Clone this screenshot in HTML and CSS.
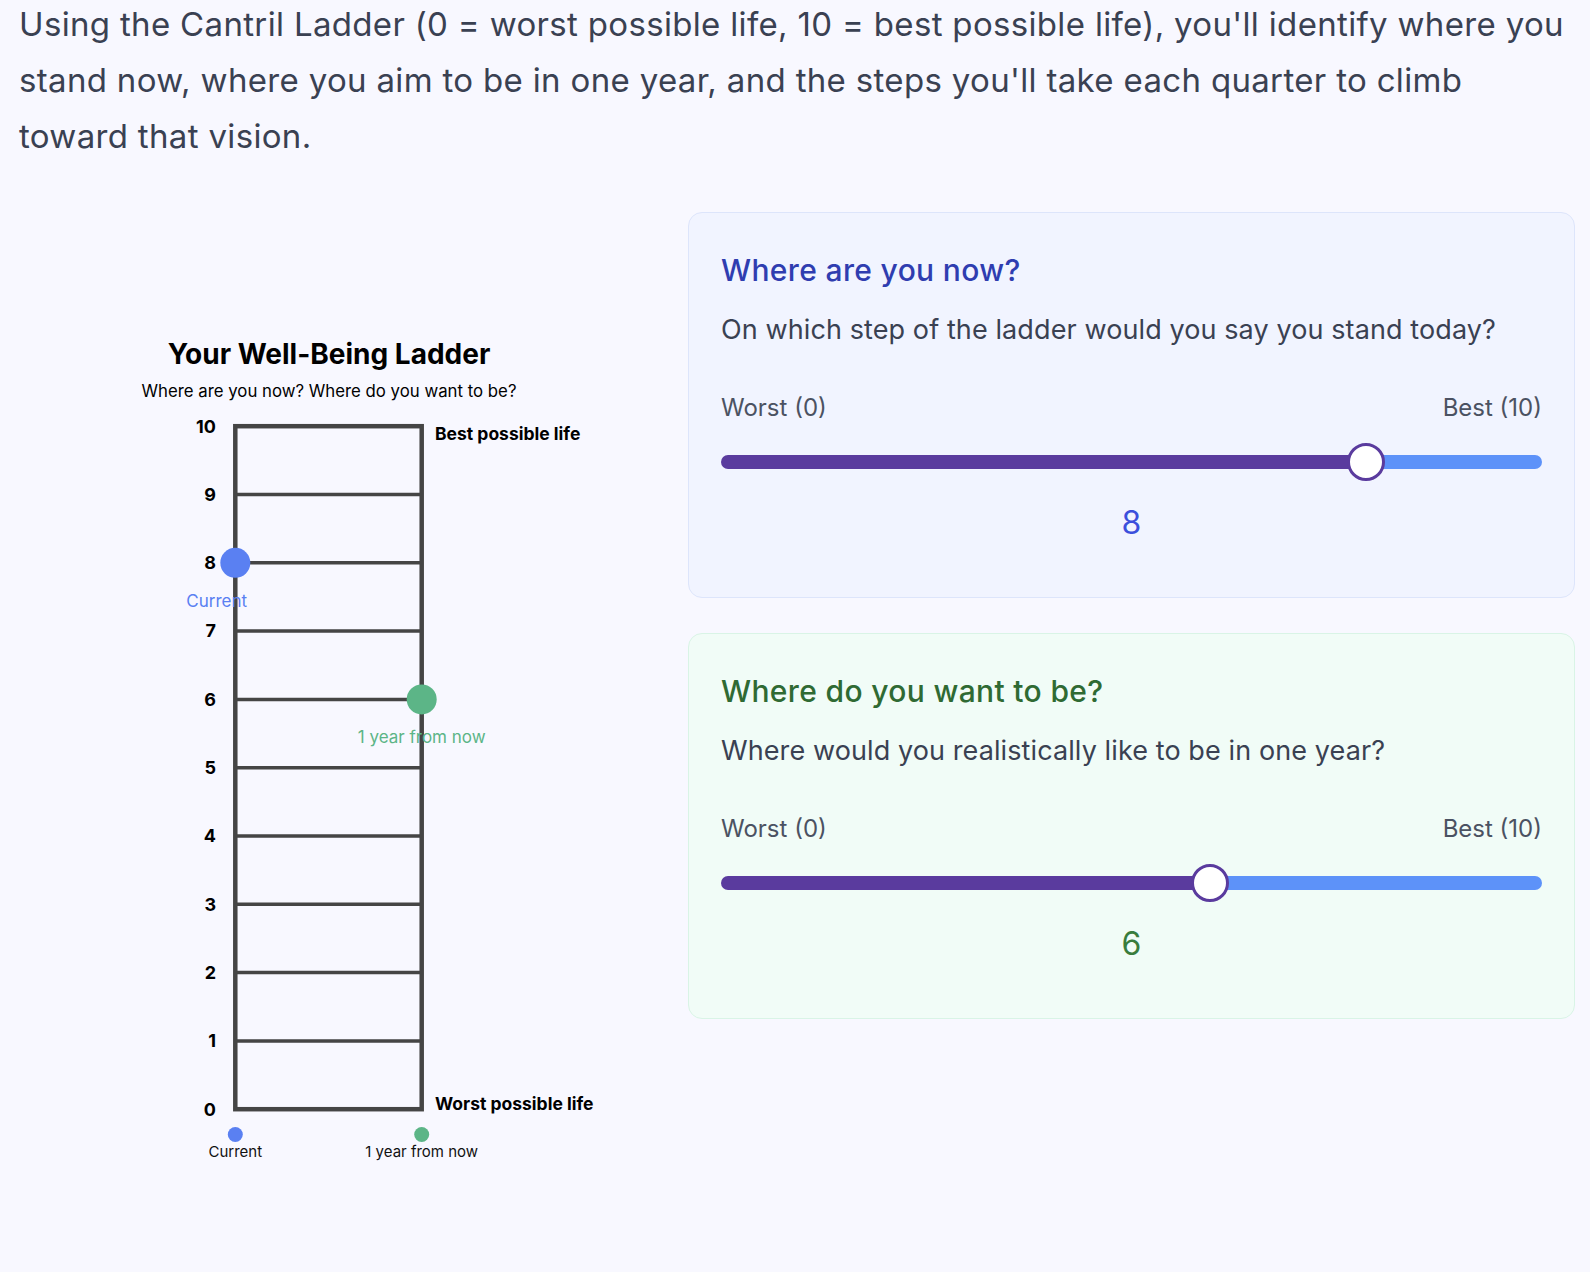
FILE: index.html
```html
<!DOCTYPE html>
<html lang="en">
<head>
<meta charset="utf-8">
<title>Cantril Ladder</title>
<link rel="stylesheet" href="styles.css">
</head>
<body>
<main class="page">
  <p class="intro">Using the Cantril Ladder (0 = worst possible life, 10 = best possible life), you'll identify where you stand now, where you aim to be in one year, and the steps you'll take each quarter to climb toward that vision.</p>
  <section class="layout">
    <div class="chart">
      <svg class="ladder" width="621" height="960" viewBox="0 -0.5 621 960" xmlns="http://www.w3.org/2000/svg">
        <text class="c-title" x="310" y="151.5" text-anchor="middle">Your Well-Being Ladder</text>
        <text class="c-sub" x="310" y="184" text-anchor="middle">Where are you now? Where do you want to be?</text>
        <g class="rungs">
          <line x1="216.3" y1="282" x2="402.7" y2="282"/>
          <line x1="216.3" y1="350.3" x2="402.7" y2="350.3"/>
          <line x1="216.3" y1="418.6" x2="402.7" y2="418.6"/>
          <line x1="216.3" y1="486.9" x2="402.7" y2="486.9"/>
          <line x1="216.3" y1="555.2" x2="402.7" y2="555.2"/>
          <line x1="216.3" y1="623.5" x2="402.7" y2="623.5"/>
          <line x1="216.3" y1="691.8" x2="402.7" y2="691.8"/>
          <line x1="216.3" y1="760.1" x2="402.7" y2="760.1"/>
          <line x1="216.3" y1="828.4" x2="402.7" y2="828.4"/>
        </g>
        <rect class="frame" x="216.3" y="213.7" width="186.4" height="683"/>
        <g class="nums" text-anchor="end">
          <text x="197" y="220">10</text>
          <text x="197" y="288">9</text>
          <text x="197" y="356.5">8</text>
          <text x="197" y="424.8">7</text>
          <text x="197" y="493">6</text>
          <text x="197" y="561.4">5</text>
          <text x="197" y="629.7">4</text>
          <text x="197" y="698">3</text>
          <text x="197" y="766.3">2</text>
          <text x="197" y="834.6">1</text>
          <text x="197" y="903">0</text>
        </g>
        <text class="end-label" x="416" y="227">Best possible life</text>
        <text class="end-label" x="416" y="897.7">Worst possible life</text>
        <circle class="dot-now" cx="216.3" cy="350.3" r="15"/>
        <text class="lbl-now" x="197.7" y="394.3" text-anchor="middle">Current</text>
        <circle class="dot-goal" cx="402.7" cy="486.9" r="15"/>
        <text class="lbl-goal" x="402.7" y="530.3" text-anchor="middle">1 year from now</text>
        <circle class="dot-now" cx="216.3" cy="922" r="7.5"/>
        <circle class="dot-goal" cx="402.7" cy="922" r="7.5"/>
        <text class="legend" x="216.3" y="944.3" text-anchor="middle">Current</text>
        <text class="legend" x="402.7" y="944.3" text-anchor="middle">1 year from now</text>
      </svg>
    </div>
    <div class="cards">
      <div class="card card-now">
        <h2 class="card-title">Where are you now?</h2>
        <p class="card-q">On which step of the ladder would you say you stand today?</p>
        <div class="scale-labels"><span>Worst (0)</span><span>Best (10)</span></div>
        <input class="slider" type="range" min="0" max="10" step="1" value="8" style="background: linear-gradient(to right, #5a3b9e 80%, #5d92f9 80%);">
        <div class="value">8</div>
      </div>
      <div class="card card-goal">
        <h2 class="card-title">Where do you want to be?</h2>
        <p class="card-q">Where would you realistically like to be in one year?</p>
        <div class="scale-labels"><span>Worst (0)</span><span>Best (10)</span></div>
        <input class="slider" type="range" min="0" max="10" step="1" value="6" style="background: linear-gradient(to right, #5a3b9e 60%, #5d92f9 60%);">
        <div class="value">6</div>
      </div>
    </div>
  </section>
</main>
</body>
</html>
```

FILE: styles.css
```css
* { box-sizing: border-box; }

html, body {
  margin: 0;
  padding: 0;
  background: #f8f8ff;
}

body {
  font-family: "Inter", "Noto Sans", sans-serif;
  color: #374151;
}

.page {
  padding: 0 15px 0 19px;
  margin-top: -4px;
}

.intro {
  margin: 0 0 48px 0;
  font-size: 33px;
  letter-spacing: 0.33px;
  line-height: 56px;
  color: #3a4152;
}

.layout {
  display: grid;
  grid-template-columns: 621px 1fr;
  column-gap: 48px;
  align-items: start;
}

.chart { width: 621px; }

.ladder {
  display: block;
  font-family: "Inter", "Noto Sans", sans-serif;
}

.c-title { font-size: 28px; font-weight: 700; fill: #000; }
.c-sub { font-size: 16.8px; fill: #000; }
.frame { fill: none; stroke: #454545; stroke-width: 4.5; }
.rungs line { stroke: #454545; stroke-width: 3.5; }
.nums text { font-size: 18px; font-weight: 700; fill: #000; }
.end-label { font-size: 17.5px; font-weight: 700; fill: #000; }
.dot-now { fill: #5a80f2; }
.dot-goal { fill: #5cb587; }
.lbl-now { font-size: 17px; fill: #5a80f2; }
.lbl-goal { font-size: 17px; fill: #5cb587; }
.legend { font-size: 15px; fill: #111; }

.cards {
  display: flex;
  flex-direction: column;
  gap: 35px;
}

.card {
  border: 1px solid #dde5fb;
  border-radius: 14px;
  padding: 39px 32px 54px 32px;
}

.card-now { background: #f1f4ff; border-color: #dde5fb; }
.card-goal { background: #f1fcf7; border-color: #d9f4e6; }

.card-title {
  margin: 0;
  font-size: 30px;
  line-height: 36px;
  letter-spacing: 0.35px;
  font-weight: 500;
}

.card-now .card-title { color: #2f3db0; }
.card-goal .card-title { color: #2f6a33; }

.card-q {
  margin: 24px 0 0 0;
  font-size: 27px;
  letter-spacing: 0.1px;
  line-height: 36px;
  color: #3a4152;
}

.scale-labels {
  margin-top: 44px;
  display: flex;
  justify-content: space-between;
  font-size: 24px;
  line-height: 32px;
  color: #4b5262;
}

.slider {
  -webkit-appearance: none;
  appearance: none;
  display: block;
  width: 100%;
  height: 14px;
  margin: 31px 0 0 0;
  border-radius: 7px;
  outline: none;
  padding: 0;
}

.slider::-webkit-slider-thumb {
  -webkit-appearance: none;
  appearance: none;
  box-sizing: border-box;
  width: 38px;
  height: 38px;
  border-radius: 50%;
  background: #fff;
  border: 3.5px solid #5a3b9e;
  cursor: pointer;
}

.slider::-moz-range-thumb {
  box-sizing: border-box;
  width: 38px;
  height: 38px;
  border-radius: 50%;
  background: #fff;
  border: 3.5px solid #5a3b9e;
}

.value {
  margin-top: 34px;
  text-align: center;
  font-size: 32px;
  line-height: 40px;
}

.card-now .value { color: #3b4fdc; }
.card-goal .value { color: #397c3d; }
```
